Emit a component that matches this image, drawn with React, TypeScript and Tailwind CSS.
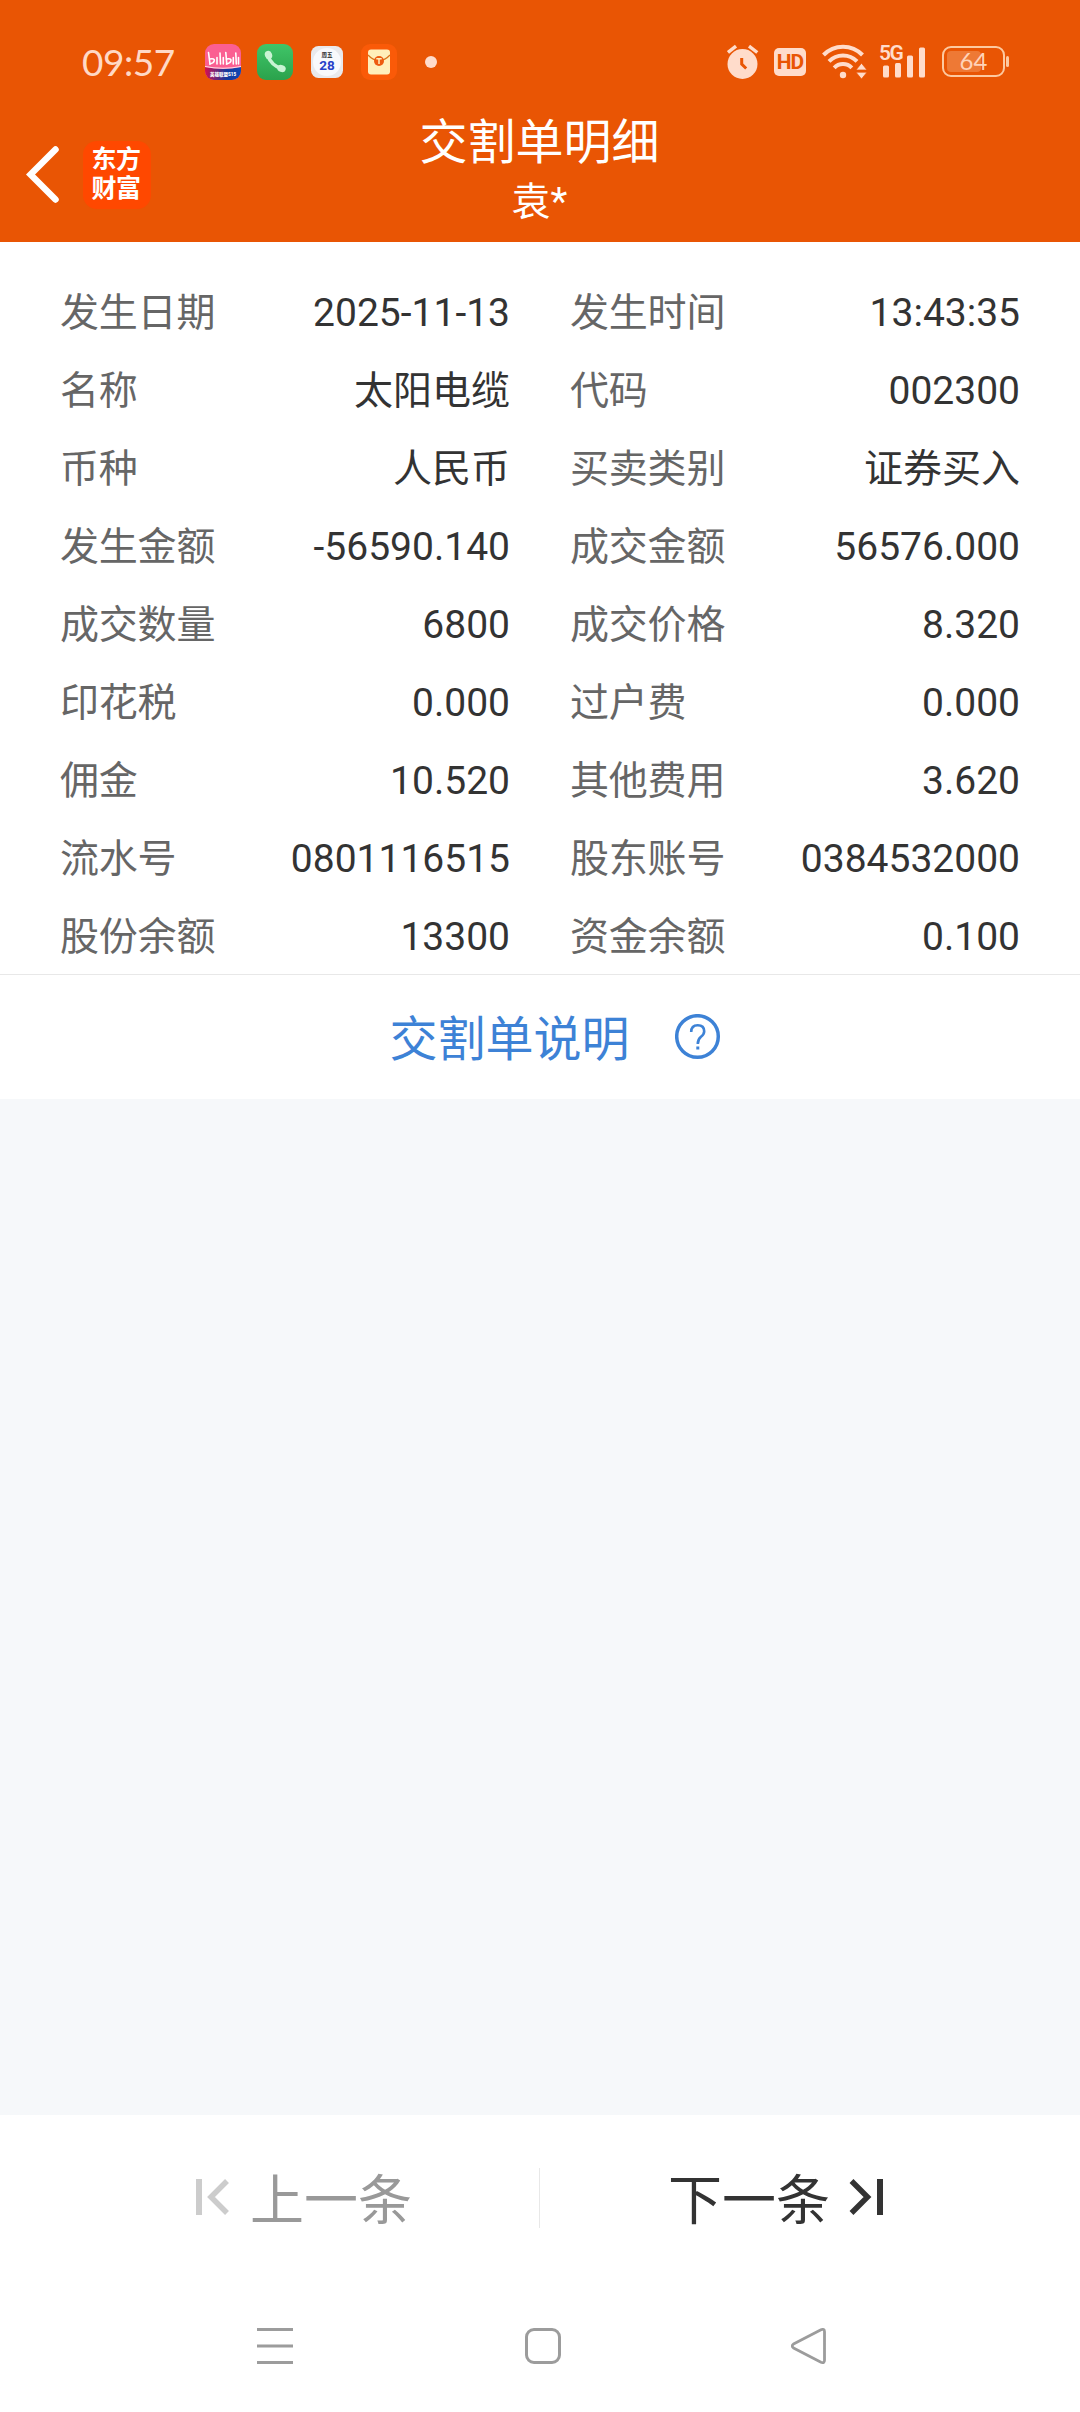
import React from 'react';

interface Field {
  label: string;
  value: string;
}

const fields: Field[] = [
  { label: '发生日期', value: '2025-11-13' },
  { label: '发生时间', value: '13:43:35' },
  { label: '名称', value: '太阳电缆' },
  { label: '代码', value: '002300' },
  { label: '币种', value: '人民币' },
  { label: '买卖类别', value: '证券买入' },
  { label: '发生金额', value: '-56590.140' },
  { label: '成交金额', value: '56576.000' },
  { label: '成交数量', value: '6800' },
  { label: '成交价格', value: '8.320' },
  { label: '印花税', value: '0.000' },
  { label: '过户费', value: '0.000' },
  { label: '佣金', value: '10.520' },
  { label: '其他费用', value: '3.620' },
  { label: '流水号', value: '0801116515' },
  { label: '股东账号', value: '0384532000' },
  { label: '股份余额', value: '13300' },
  { label: '资金余额', value: '0.100' },
];

const BilibiliIcon = () => (
  <svg width="36" height="36" viewBox="0 0 36 36">
    <defs>
      <clipPath id="bili">
        <rect width="36" height="36" rx="9" />
      </clipPath>
      <linearGradient id="biliFoot">
        <stop offset="0" stopColor="#d5104f" />
        <stop offset="0.6" stopColor="#123a9c" />
        <stop offset="1" stopColor="#0f46b4" />
      </linearGradient>
    </defs>
    <g clipPath="url(#bili)">
      <rect width="36" height="36" fill="#fb5f92" />
      <path d="M0 23Q18 27 36 23V36H0Z" fill="url(#biliFoot)" />
      <path d="M0 22.5Q18 26 36 22.5" fill="none" stroke="#fff" strokeWidth="0.8" />
      <g fill="none" stroke="#fff" strokeWidth="1.6" strokeLinecap="round">
        <path d="M3.500 8.500l1.500 11.500M12 13.500v6.500M15 9l.5 11M18.300 13.500v6.500M20.800 8.500l1 11.500M28.300 13.500v6.500M30.800 9l.5 11M33.500 13.500v6.500" />
        <path d="M4.800 15q5-.8 4.500 1.700t-4.500 3.300M21.500 15q5-.8 4.500 1.700t-4.500 3.300" />
      </g>
    </g>
    <text x="18" y="31.700" textAnchor="middle" fontSize="4.500" fontWeight="900" fill="#fff">
      英雄联盟S15
    </text>
  </svg>
);

const PhoneIcon = () => (
  <svg width="36" height="36" viewBox="0 0 36 36">
    <defs>
      <linearGradient id="phone" x2="0" y2="1">
        <stop offset="0" stopColor="#3fc568" />
        <stop offset="1" stopColor="#2ba24c" />
      </linearGradient>
    </defs>
    <rect width="36" height="36" rx="9" fill="url(#phone)" />
    <path d="M11 12q3 9 14 13" fill="none" stroke="#c9f3d3" strokeWidth="3.600" />
    <ellipse cx="11.500" cy="11" rx="3.600" ry="4.300" transform="rotate(-20 11.500 11)" fill="#c9f3d3" />
    <ellipse cx="24.500" cy="24.500" rx="4.300" ry="3.500" transform="rotate(20 24.500 24.500)" fill="#c9f3d3" />
  </svg>
);

const CalendarIcon = () => (
  <svg width="32" height="32" viewBox="0 0 32 32">
    <rect width="32" height="32" rx="7.500" fill="#e9e9ec" />
    <circle cx="16" cy="16" r="14" fill="#f8f9fc" />
    <text x="16" y="10.500" textAnchor="middle" fontSize="5.500" fontWeight="700" fill="#333">
      周五
    </text>
    <text x="16" y="23.500" textAnchor="middle" fontSize="13.500" fontWeight="700" fill="#2740c8">
      28
    </text>
  </svg>
);

const EnvelopeIcon = () => (
  <svg width="36" height="36" viewBox="0 0 36 36">
    <rect width="36" height="36" rx="9" fill="#fa5a08" />
    <rect x="7" y="5.500" width="22" height="25" rx="3" fill="#ffeebb" />
    <path d="M7 11q5 5.500 11 5.500T29 11" fill="none" stroke="#d8731c" strokeWidth="1.200" />
    <circle cx="18" cy="17" r="5" fill="#ee5a10" />
    <path d="M15.300 14.800h5.400M18 14.800v5.200" stroke="#ffeebb" strokeWidth="1.500" />
  </svg>
);

const AlarmIcon = () => (
  <svg width="32" height="36" viewBox="0 0 32 36">
    <circle cx="15.500" cy="20" r="15" fill="#ffdccb" />
    <path d="M1 8.500L9 2.200M22 2.200l8.300 6.300" stroke="#ffdccb" strokeWidth="3.400" />
    <path d="M14.700 14v6.200l4.500 4.300" fill="none" stroke="#e95504" strokeWidth="3" />
  </svg>
);

const WifiIcon = () => (
  <svg width="45" height="36" viewBox="0 0 45 36">
    <g fill="none" stroke="#ffdccb" strokeWidth="4">
      <path d="M1.500 11a27 27 0 0 1 39 0" />
      <path d="M7 17.400a19.500 19.500 0 0 1 28 0" />
      <path d="M12.200 23.800a12 12 0 0 1 17.600 0" />
    </g>
    <circle cx="21" cy="31" r="3.200" fill="#ffdccb" />
    <path d="M34 26h11l-5.500-6.800zM34 28.200h11l-5.500 6.800z" fill="#ffdccb" stroke="#e95504" strokeWidth="0.700" />
  </svg>
);

const SignalIcon = () => (
  <div className="relative h-9 w-12">
    <svg width="48" height="36" viewBox="0 0 48 36" fill="#ffdccb">
      <rect x="3" y="21.500" width="6" height="12" rx="1.500" />
      <rect x="15" y="19" width="6" height="14.500" rx="1.500" />
      <rect x="27" y="11.500" width="6" height="22" rx="1.500" />
      <rect x="39" y="3.500" width="6" height="30" rx="1.500" />
    </svg>
    <span className="absolute -top-[3px] -left-px text-[21px] leading-6 font-semibold tracking-[-1.500px] text-[#ffdccb]">5G</span>
  </div>
);

const BatteryIcon = () => (
  <svg width="68" height="32" viewBox="0 0 68 32">
    <rect x="1" y="1" width="61" height="29" rx="8" fill="none" stroke="#fdc9a0" strokeWidth="2" />
    <rect x="5" y="5" width="34" height="21" rx="4" fill="#ee7935" />
    <rect x="64" y="10" width="3" height="11" rx="1.500" fill="#fdc9a0" />
    <text x="31.500" y="24.300" textAnchor="middle" fontFamily="Lato" fontSize="24" fill="#ffd2b8">
      64
    </text>
  </svg>
);

const StatusBar = () => (
  <div className="flex h-[125px] items-start px-[70px] pt-11">
    <div className="flex h-9 w-full items-center">
      <span className="ml-3 w-[123px] font-[Lato] text-[37px] leading-9 tracking-[-0.500px] text-[#ffd9c6]">09:57</span>
      <BilibiliIcon />
      <span className="w-4" />
      <PhoneIcon />
      <span className="w-[18px]" />
      <CalendarIcon />
      <span className="w-[18px]" />
      <EnvelopeIcon />
      <span className="ml-7 size-3 rounded-full bg-[#ffdccb]" />
      <div className="ml-auto flex items-center">
        <AlarmIcon />
        <span className="ml-[15px] flex h-7 w-8 items-center justify-center rounded-[5px] bg-[#ffdccb] pt-px font-[Roboto] text-[21px] leading-none font-bold tracking-tighter text-[#e95504]">
          HD
        </span>
        <span className="w-4" />
        <WifiIcon />
        <span className="w-[13px]" />
        <SignalIcon />
        <span className="w-[14px]" />
        <BatteryIcon />
      </div>
    </div>
  </div>
);

const Header = () => (
  <header className="h-[242px] bg-[#e95504] text-white">
    <StatusBar />
    <div className="grid h-[117px] grid-cols-[1fr_auto_1fr]">
      <div className="flex items-start gap-[23px] pt-4 pl-[26px]">
        <svg className="mt-[5px]" width="34" height="58" viewBox="0 0 34 58">
          <path d="M29.500 3.500L4.500 28.500l25 25" fill="none" stroke="#fff" strokeWidth="6.500" strokeLinecap="round" />
        </svg>
        <div className="flex size-[68px] flex-col items-center justify-center rounded-[14px] bg-[#ff4800] pr-0.5 pb-0.5 text-[25px] leading-[29px] font-bold tracking-[-0.500px]">
          <span>东方</span>
          <span>财富</span>
        </div>
      </div>
      <div className="pr-px text-center">
        <h1 className="-mt-[7px] text-[48px] leading-[50px]">交割单明细</h1>
        <p className="mt-[10px] text-[39px] leading-[48px]">袁*</p>
      </div>
      <div />
    </div>
  </header>
);

const App: React.FC = () => {
  return (
    <div className="flex h-[2412px] w-[1080px] flex-col bg-[#f6f8fa] font-[Roboto,'Noto_Sans_CJK_SC',sans-serif]">
      <Header />

      <section className="h-[733px] border-b border-[#e8e8e8] bg-white px-[60px] pt-8">
        <div className="grid grid-cols-2 gap-x-[60px]">
          {fields.map((field) => (
            <div key={field.label} className="flex h-[78px] items-center justify-between pt-px text-[39px] leading-none">
              <span className="tracking-[-0.200px] text-[#666]">{field.label}</span>
              <span className="text-[#333]">{field.value}</span>
            </div>
          ))}
        </div>
      </section>

      <div className="flex h-[124px] items-center justify-center bg-white pl-[30px] text-[#3d82d6]">
        <span className="pt-[6px] text-[48px] leading-none">交割单说明</span>
        <svg className="ml-[45px]" width="46" height="46" viewBox="0 0 46 46" fill="none" stroke="currentColor">
          <circle cx="22.500" cy="22.500" r="20.800" strokeWidth="3.500" />
          <path d="M16.200 18q0-6.800 6.500-6.800t6.500 6q0 3-3.200 5.500T22.800 30" strokeWidth="2.600" />
          <path d="M22.800 32.500v3" strokeWidth="3" />
        </svg>
      </div>

      <main className="flex-1" />

      <footer className="bg-white">
        <div className="flex h-[165px] items-center">
          <button className="flex h-[60px] w-[539px] items-center pl-[193px] text-[54px] leading-none text-[#999]">
            <svg width="36" height="40" viewBox="0 0 36 40" fill="none" stroke="#ccc">
              <path d="M6 1v36" strokeWidth="6" />
              <path d="M34 3L18 19l16 16" strokeWidth="5.500" />
            </svg>
            <span className="ml-[21px] pt-[9px]">上一条</span>
          </button>
          <span className="h-[60px] w-px bg-[#e8e8e8]" />
          <button className="flex h-[60px] flex-1 items-center pl-[128px] text-[54px] leading-none text-[#333]">
            <span className="pt-[9px]">下一条</span>
            <svg className="ml-[19px]" width="36" height="40" viewBox="0 0 36 40" fill="none" stroke="currentColor">
              <path d="M2.500 3l16 16-16 16" strokeWidth="5.500" />
              <path d="M31 1v36" strokeWidth="6" />
            </svg>
          </button>
        </div>

        <nav className="flex h-[132px] items-center pl-[257px]">
          <svg width="36" height="36" viewBox="0 0 36 36" stroke="#9c9c9c" strokeWidth="3">
            <path d="M0 1.500h36M0 18h36M0 34.500h36" />
          </svg>
          <span className="ml-[232px] size-9 rounded-[9px] border-[3px] border-[#9c9c9c]" />
          <svg className="ml-[230px]" width="36" height="36" viewBox="0 0 36 36" fill="none" stroke="#9c9c9c">
            <path
              d="M2.500 16L30 1.800q3.500-1.500 3.500 2v28.400q0 3.500-3.500 2L2.500 20q-2.500-2 0-4Z"
              strokeWidth="2.800"
              strokeLinejoin="round"
            />
          </svg>
        </nav>
      </footer>
    </div>
  );
};

export default App;
